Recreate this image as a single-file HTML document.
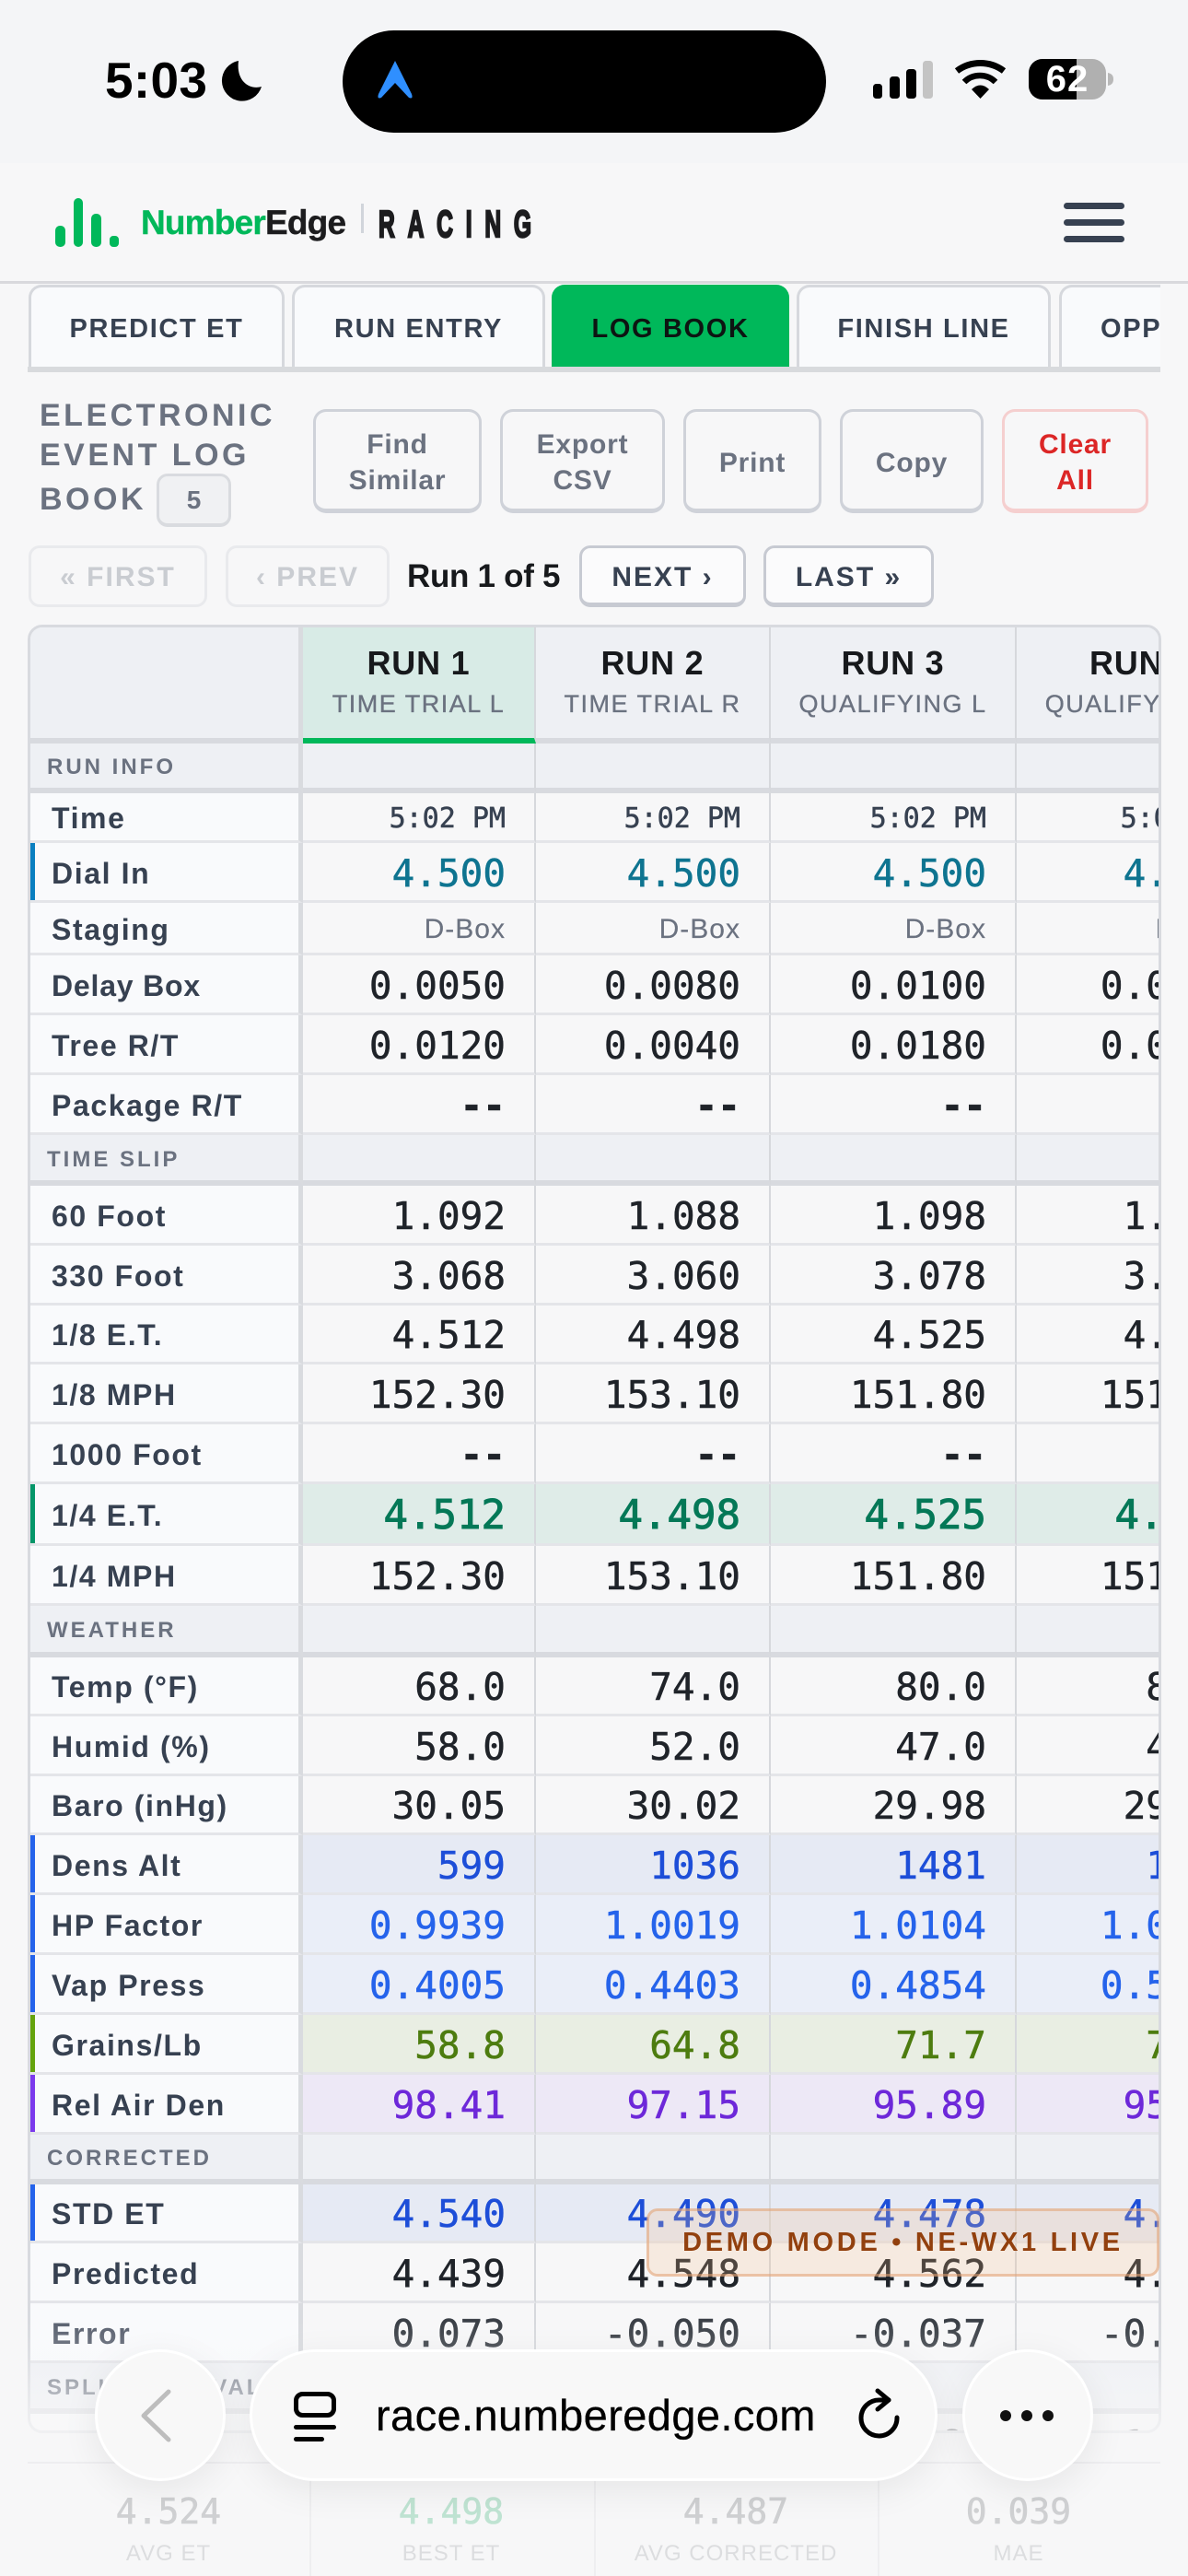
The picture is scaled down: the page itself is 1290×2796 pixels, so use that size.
<!DOCTYPE html>
<html><head><meta charset="utf-8"><title>NumberEdge Racing</title>
<style>
*{box-sizing:border-box}
html,body{margin:0;padding:0;width:1290px;height:2796px;overflow:hidden;background:#f7f7f8;font-family:"Liberation Sans",sans-serif}
.a{position:absolute}
.tab{position:absolute;top:309px;height:89px;background:#f9fafc;border:3px solid #d6d8dd;border-bottom:0;border-radius:14px 14px 0 0;font-weight:700;font-size:29px;letter-spacing:1.65px;color:#374151;text-align:center;line-height:90px;white-space:nowrap;overflow:hidden}
.btn{position:absolute;top:444px;height:113px;background:#f7f7f8;border:3px solid #cfd2d9;border-bottom-width:5px;border-radius:14px;color:#6b7280;font-weight:700;font-size:30px;line-height:39px;letter-spacing:.8px;text-align:center;display:flex;align-items:center;justify-content:center;padding-top:5px}
.pg{position:absolute;top:592px;height:67px;background:#fbfbfc;border:3px solid #c7cad2;border-bottom-width:5px;border-radius:12px;font-weight:700;font-size:30px;letter-spacing:2px;color:#374151;text-align:center;line-height:63px}
.pg.d{background:#f7f7f8;border:3px solid #e9eaed;color:#c9ccd1}
.title{position:absolute;left:43px;color:#6b7280;font-weight:700;font-size:34px;letter-spacing:3.5px;white-space:nowrap;line-height:1}
#wrap{position:absolute;left:30px;top:678px;width:1231px;height:1963px;border:3px solid #d8dadf;border-radius:16px;overflow:hidden;background:#f7f7f8}
table{border-collapse:separate;border-spacing:0;table-layout:fixed;width:1343px;position:absolute;left:0;top:0}
td{padding:4px 31px 0 0;border-bottom:3px solid #e4e5e9;border-right:2px solid #d6d8dc;text-align:right;white-space:nowrap;overflow:hidden;line-height:1;font-family:"DejaVu Sans Mono","Liberation Mono",monospace;font-size:41px;color:#1f2329;vertical-align:middle;-webkit-text-stroke:.5px currentColor}
td:first-child{position:relative;text-align:left;padding:3px 0 0 23px;background:#f9fafc;border-right:5px solid #d9dbdf;font-family:"Liberation Sans",sans-serif;font-weight:700;font-size:32px;letter-spacing:1.6px;color:#374151;-webkit-text-stroke:0}
td.dd{font-weight:700}
tr.s td{background:#eef0f4;border-bottom:6px solid #d8dadf;padding-top:4px}
tr.s td:first-child{font-size:24px;letter-spacing:3px;color:#6b7280;padding-left:18px;background:#eef0f4;padding-top:4px}
tr.h td{background:#eef0f4;border-bottom:6px solid #d8dadf;text-align:center;padding:0 0 2px 0;font-family:"Liberation Sans",sans-serif;-webkit-text-stroke:0}
tr.h td:first-child{padding:0;background:#eef0f4}
tr.h td.on{background:#d8ebe6;border-bottom-color:#00b85a}
tr.h b{display:block;font-size:36px;letter-spacing:.8px;color:#17191c;line-height:42px;margin-bottom:6px}
tr.h span{display:block;font-size:27px;letter-spacing:1.5px;color:#6b7280;line-height:34px;-webkit-text-stroke:.35px #6b7280;white-space:nowrap;overflow:hidden}
td i{position:absolute;left:0;top:-2px;bottom:-3px;width:5px;display:block}
tr.t td:not(:first-child){font-size:30px;color:#374151}
tr.st td:not(:first-child){font-family:"Liberation Sans",sans-serif;font-size:30px;letter-spacing:1px;color:#6b7280;-webkit-text-stroke:.2px currentColor}
tr.et td:not(:first-child){background:#dfece8;color:#047857;font-size:44px;-webkit-text-stroke:1px currentColor}
tr.da td:not(:first-child){background:#e6eaf4;color:#1d4ed8}
tr.hp td:not(:first-child){background:#eaeef8;color:#2563eb}
tr.gr td:not(:first-child){background:#e9eee3;color:#4d7c0f}
tr.re td:not(:first-child){background:#ede8f6;color:#6d28d9}
tr.di td:not(:first-child){color:#0e7490}
tr.er td:first-child{color:#5b6270}
tr.er td{color:#3a3f46}
#demo{position:absolute;left:702px;top:2397px;width:557px;height:74px;background:rgba(245,190,140,.22);border:3px solid rgba(225,160,115,.55);border-radius:12px;color:#92400e;font-weight:700;font-size:29px;letter-spacing:3.7px;text-align:center;line-height:68px;white-space:nowrap}
#fade{position:absolute;left:0;top:2440px;width:1290px;height:356px;background:linear-gradient(to bottom,rgba(247,247,248,0) 80px,rgba(247,247,248,.15) 110px,rgba(247,247,248,.45) 150px,rgba(247,247,248,.72) 190px,rgba(247,247,248,.86) 230px,rgba(247,247,248,.88) 100%)}
.sv{position:absolute;top:2707px;font-family:"DejaVu Sans Mono",monospace;font-size:38px;line-height:1;color:#cfd0d2;width:308px;text-align:center;-webkit-text-stroke:.6px currentColor}
.sl{position:absolute;top:2760px;font-size:24px;line-height:1;letter-spacing:1px;color:#dcdddf;width:308px;text-align:center;white-space:nowrap}
.pill{position:absolute;top:2550px;height:143px;background:#f8f8f8;border:3px solid #fff;border-radius:72px;box-shadow:0 10px 40px rgba(0,0,0,.07)}
</style></head><body>

<div class="a" style="left:0;top:0;width:1290px;height:177px;background:#f4f5f7"></div>
<div class="a" style="left:372px;top:33px;width:525px;height:111px;background:#000;border-radius:56px"></div>
<div class="a" style="left:114px;top:57px;font-size:55px;font-weight:700;line-height:60px;color:#000;letter-spacing:.3px">5:03</div>

<div class="a" style="left:1117px;top:64px;width:84px;height:44px;border-radius:15px;overflow:hidden;background:#b0b0b0"><div style="width:52px;height:44px;background:#000"></div></div>
<div class="a" style="left:1117px;top:64px;width:84px;height:44px;text-align:center;line-height:45px;font-weight:700;font-size:40px;letter-spacing:1px;color:#fff">62</div>

<div class="a" style="left:0;top:177px;width:1290px;height:128px;background:#f7f7f8"></div>
<div class="a" style="left:0;top:305px;width:1290px;height:3px;background:#d9d9dd"></div>
<div class="a" style="left:153px;top:221px;font-size:37px;font-weight:700;letter-spacing:-.8px;line-height:42px;white-space:nowrap;color:#00b85a;-webkit-text-stroke:.4px currentColor">Number<span style="color:#1c1c1e">Edge</span></div>
<div class="a" style="left:392px;top:221px;width:3px;height:32px;background:#d1d5db"></div>
<div class="a" style="left:411px;top:220px;font-size:41px;font-weight:700;line-height:46px;color:#1c1c1e;letter-spacing:23px;white-space:nowrap;transform:scaleX(.6);transform-origin:0 0;-webkit-text-stroke:2.5px #1c1c1e">RACING</div>
<div class="a" style="left:1155px;top:220px;width:66px;height:7px;border-radius:4px;background:#374151"></div>
<div class="a" style="left:1155px;top:238px;width:66px;height:7px;border-radius:4px;background:#374151"></div>
<div class="a" style="left:1155px;top:256px;width:66px;height:7px;border-radius:4px;background:#374151"></div>

<div class="a" style="left:30px;top:398px;width:1230px;height:6px;background:#d8dadd"></div>
<div class="tab" style="left:31px;width:278px">PREDICT ET</div>
<div class="tab" style="left:317px;width:275px">RUN ENTRY</div>
<div class="tab" style="left:599px;width:258px;background:#00b85a;border-color:#00b85a;color:#0d1512">LOG BOOK</div>
<div class="tab" style="left:865px;width:276px">FINISH LINE</div>
<div class="tab" style="left:1150px;width:110px;border-right:0;border-top-right-radius:0;text-align:left;padding-left:42px">OPP</div>

<div class="title" style="top:434px">ELECTRONIC</div>
<div class="title" style="top:477px">EVENT LOG</div>
<div class="title" style="top:525px">BOOK</div>
<div class="a" style="left:170px;top:514px;width:81px;height:58px;background:#f0f1f3;border:3px solid #d9dbdf;border-bottom-width:4px;border-radius:12px;color:#6b7280;font-weight:700;font-size:28px;text-align:center;line-height:52px">5</div>

<div class="btn" style="left:340px;width:183px">Find<br>Similar</div>
<div class="btn" style="left:543px;width:179px">Export<br>CSV</div>
<div class="btn" style="left:742px;width:150px">Print</div>
<div class="btn" style="left:912px;width:156px">Copy</div>
<div class="btn" style="left:1088px;width:159px;color:#dc2626;border-color:#f5cfcf">Clear<br>All</div>

<div class="pg d" style="left:31px;width:194px">« FIRST</div>
<div class="pg d" style="left:245px;width:178px">‹ PREV</div>
<div class="a" style="left:442px;top:606px;font-size:35px;font-weight:700;line-height:40px;color:#17191c;white-space:nowrap;letter-spacing:-.3px">Run 1 of 5</div>
<div class="pg" style="left:629px;width:181px">NEXT ›</div>
<div class="pg" style="left:829px;width:185px">LAST »</div>

<div id="wrap">
<table>
<colgroup><col style="width:296px"><col style="width:253px"><col style="width:255px"><col style="width:267px"><col style="width:272px"></colgroup>
<tr class="h" style="height:126px"><td></td><td class="on"><b>RUN 1</b><span>TIME TRIAL L</span></td><td><b>RUN 2</b><span>TIME TRIAL R</span></td><td><b>RUN 3</b><span>QUALIFYING L</span></td><td><b>RUN 4</b><span>QUALIFYING R</span></td></tr>
<tr class="s" style="height:54px"><td>RUN INFO</td><td></td><td></td><td></td><td></td></tr>
<tr class="t" style="height:54px"><td>Time</td><td>5:02 PM</td><td>5:02 PM</td><td>5:02 PM</td><td>5:02 PM</td></tr>
<tr class="di" style="height:65px"><td><i style="background:#0a7fc0"></i>Dial In</td><td>4.500</td><td>4.500</td><td>4.500</td><td>4.500</td></tr>
<tr class="st" style="height:57px"><td>Staging</td><td>D-Box</td><td>D-Box</td><td>D-Box</td><td>D-Box</td></tr>
<tr style="height:65px"><td style="letter-spacing:.8px">Delay Box</td><td>0.0050</td><td>0.0080</td><td>0.0100</td><td>0.0110</td></tr>
<tr style="height:65px"><td>Tree R/T</td><td>0.0120</td><td>0.0040</td><td>0.0180</td><td>0.0100</td></tr>
<tr style="height:65px"><td>Package R/T</td><td class="dd">--</td><td class="dd">--</td><td class="dd">--</td><td class="dd">--</td></tr>
<tr class="s" style="height:55px"><td>TIME SLIP</td><td></td><td></td><td></td><td></td></tr>
<tr style="height:65px"><td>60 Foot</td><td>1.092</td><td>1.088</td><td>1.098</td><td>1.096</td></tr>
<tr style="height:65px"><td>330 Foot</td><td>3.068</td><td>3.060</td><td>3.078</td><td>3.075</td></tr>
<tr style="height:64px"><td>1/8 E.T.</td><td>4.512</td><td>4.498</td><td>4.525</td><td>4.520</td></tr>
<tr style="height:65px"><td>1/8 MPH</td><td>152.30</td><td>153.10</td><td>151.80</td><td>151.90</td></tr>
<tr style="height:65px"><td>1000 Foot</td><td class="dd">--</td><td class="dd">--</td><td class="dd">--</td><td class="dd">--</td></tr>
<tr class="et" style="height:67px"><td><i style="background:#059669"></i>1/4 E.T.</td><td>4.512</td><td>4.498</td><td>4.525</td><td>4.520</td></tr>
<tr style="height:65px"><td>1/4 MPH</td><td>152.30</td><td>153.10</td><td>151.80</td><td>151.90</td></tr>
<tr class="s" style="height:56px"><td>WEATHER</td><td></td><td></td><td></td><td></td></tr>
<tr style="height:64px"><td>Temp (°F)</td><td>68.0</td><td>74.0</td><td>80.0</td><td>85.0</td></tr>
<tr style="height:65px"><td>Humid (%)</td><td>58.0</td><td>52.0</td><td>47.0</td><td>43.0</td></tr>
<tr style="height:64px"><td>Baro (inHg)</td><td>30.05</td><td>30.02</td><td>29.98</td><td>29.95</td></tr>
<tr class="da" style="height:65px"><td><i style="background:#2563eb"></i>Dens Alt</td><td>599</td><td>1036</td><td>1481</td><td>1840</td></tr>
<tr class="hp" style="height:65px"><td><i style="background:#2563eb"></i>HP Factor</td><td>0.9939</td><td>1.0019</td><td>1.0104</td><td>1.0175</td></tr>
<tr class="hp" style="height:65px"><td><i style="background:#2563eb"></i>Vap Press</td><td>0.4005</td><td>0.4403</td><td>0.4854</td><td>0.5290</td></tr>
<tr class="gr" style="height:65px"><td><i style="background:#65a30d"></i>Grains/Lb</td><td>58.8</td><td>64.8</td><td>71.7</td><td>78.0</td></tr>
<tr class="re" style="height:65px"><td><i style="background:#7c3aed"></i>Rel Air Den</td><td>98.41</td><td>97.15</td><td>95.89</td><td>95.00</td></tr>
<tr class="s" style="height:54px"><td>CORRECTED</td><td></td><td></td><td></td><td></td></tr>
<tr class="da" style="height:64px"><td><i style="background:#2563eb"></i>STD ET</td><td>4.540</td><td>4.490</td><td>4.478</td><td>4.470</td></tr>
<tr style="height:65px"><td>Predicted</td><td>4.439</td><td>4.548</td><td>4.562</td><td>4.575</td></tr>
<tr class="er" style="height:65px"><td>Error</td><td>0.073</td><td>-0.050</td><td>-0.037</td><td>-0.055</td></tr>
<tr class="s" style="height:55px"><td>SPLIT INTERVALS</td><td></td><td></td><td></td><td></td></tr>
<tr style="height:65px"><td>60-330</td><td>1.976</td><td>1.972</td><td>1.980</td><td>1.979</td></tr>
</table>
</div>

<div id="demo">DEMO MODE • NE-WX1 LIVE</div>
<div id="fade"></div>

<div class="a" style="left:30px;top:2672px;width:1230px;height:2px;background:#eeeef0"></div>
<div class="a" style="left:336px;top:2672px;width:2px;height:124px;background:#eeeef0"></div>
<div class="a" style="left:645px;top:2672px;width:2px;height:124px;background:#eeeef0"></div>
<div class="a" style="left:953px;top:2672px;width:2px;height:124px;background:#eeeef0"></div>
<div class="sv" style="left:29px">4.524</div><div class="sl" style="left:29px">AVG ET</div>
<div class="sv" style="left:336px;color:#bfe3d2">4.498</div><div class="sl" style="left:336px">BEST ET</div>
<div class="sv" style="left:645px">4.487</div><div class="sl" style="left:645px">AVG CORRECTED</div>
<div class="sv" style="left:952px">0.039</div><div class="sl" style="left:952px">MAE</div>

<div class="pill" style="left:103px;width:142px"></div>
<div class="pill" style="left:271px;width:747px"></div>
<div class="pill" style="left:1045px;width:142px"></div>
<div class="a" style="left:408px;top:2594px;font-size:47px;line-height:56px;color:#000;letter-spacing:.4px;white-space:nowrap;-webkit-text-stroke:.3px #000">race.numberedge.com</div>

<svg class="a" style="left:0;top:0" width="1290" height="2796" viewBox="0 0 1290 2796">
<path d="M429 66 L447 102 Q449 108 444 106 L429 90 L414 106 Q409 108 411 102 Z" fill="#2f8fff"/>
<path d="M259 66 A22 22 0 1 0 284 94 C271 98 256 88 259 66 Z" fill="#000"/>
<rect x="948" y="91" width="10" height="16" rx="3.5" fill="#000"/>
<rect x="966" y="83" width="11" height="24" rx="3.5" fill="#000"/>
<rect x="984" y="75" width="11" height="32" rx="3.5" fill="#000"/>
<rect x="1002" y="66" width="11" height="41" rx="3.5" fill="#c4c4c4"/>
<path d="M1064.5 107 L1055 97 Q1064.5 88 1074 97 Z" fill="#000"/>
<path d="M1047 89 A24 24 0 0 1 1081 89" fill="none" stroke="#000" stroke-width="6.5"/>
<path d="M1039 77 A42.5 42.5 0 0 1 1090 77" fill="none" stroke="#000" stroke-width="7"/>
<path d="M1203 79 Q1209 80 1209 86 Q1209 92 1203 93 Z" fill="#b8b8b8"/>
<rect x="60" y="245" width="11" height="23" rx="5" fill="#00b85a"/>
<rect x="80" y="215" width="10" height="53" rx="5" fill="#00b85a"/>
<rect x="99" y="232" width="11" height="36" rx="5" fill="#00b85a"/>
<rect x="119" y="256" width="10" height="12" rx="4" fill="#00b85a"/>
<path d="M183 2596 L156 2622 L183 2648" fill="none" stroke="#bdbdbd" stroke-width="5" stroke-linecap="round" stroke-linejoin="round"/>
<rect x="321.5" y="2598.5" width="41" height="23" rx="7" fill="none" stroke="#000" stroke-width="5"/>
<rect x="319" y="2632" width="46" height="5" rx="2.5" fill="#000"/>
<rect x="319" y="2645" width="33" height="5" rx="2.5" fill="#000"/>
<path d="M974 2624 A19.5 19.5 0 1 1 955 2605 L965 2605" fill="none" stroke="#000" stroke-width="5" stroke-linecap="round"/>
<path d="M953 2595 L965 2605 L953 2615" fill="none" stroke="#000" stroke-width="5" stroke-linecap="round" stroke-linejoin="round"/>
<circle cx="1092" cy="2622" r="6" fill="#111"/><circle cx="1115" cy="2622" r="6" fill="#111"/><circle cx="1138" cy="2622" r="6" fill="#111"/>
</svg>
</body></html>
